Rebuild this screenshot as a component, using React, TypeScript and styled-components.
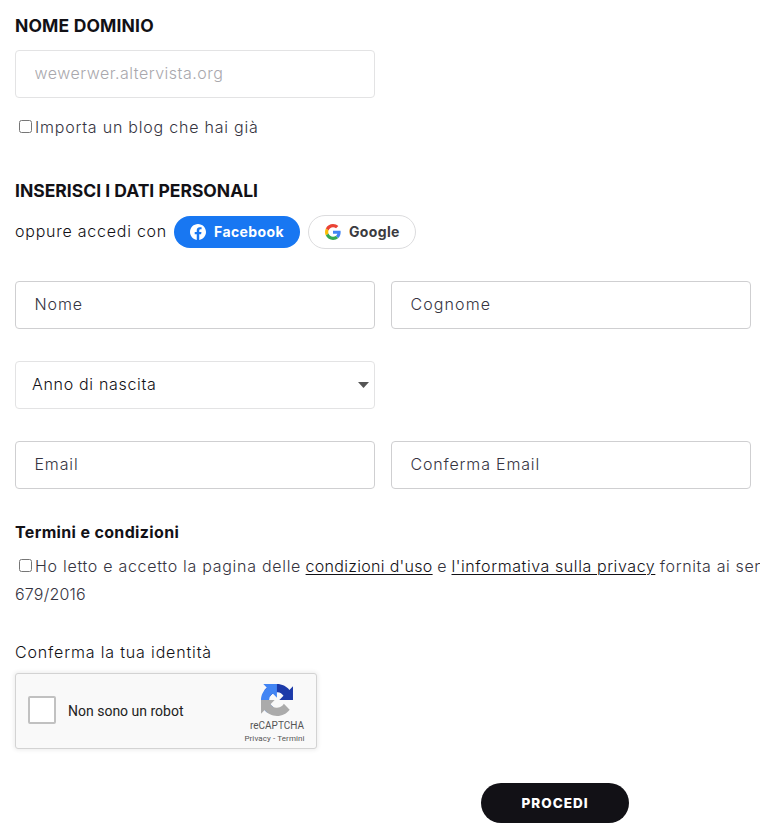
import React from "react";
import styled, { createGlobalStyle, css } from "styled-components";

const GlobalStyle = createGlobalStyle`
  *, *::before, *::after { box-sizing: border-box; }
  html, body { margin: 0; overflow: hidden; background: #fff; }
  body {
    font-family: Inter, "Open Sans", sans-serif;
    font-size: 16px;
    font-weight: 300;
    line-height: 28px;
    color: #121116;
  }
`;

type Tracked = { $track?: number };
const track = css<Tracked>`letter-spacing: ${(p) => p.$track ?? 0}px;`;

const Form = styled.form`
  display: flex;
  flex-direction: column;
  align-items: flex-start;
  height: 829px;
  padding: 12px 0 0 15px;
  overflow: hidden;
`;

const Section = styled.section<{ $top?: number }>`
  display: flex;
  flex-direction: column;
  align-items: flex-start;
  margin-top: ${(p) => p.$top ?? 0}px;
`;

const Title = styled.h2<Tracked>`
  margin: 0;
  font-size: 17.5px;
  font-weight: 650;
  line-height: 28px;
  ${track}
`;

const Subtitle = styled.h3<Tracked>`
  margin: 0;
  font-size: 16px;
  font-weight: 650;
  line-height: 28px;
  ${track}
`;

const Label = styled.span<Tracked>`
  white-space: nowrap;
  ${track}
`;

const fieldBox = css`
  width: 360px;
  height: 48px;
  border-radius: 4px;
  background: #fff;
  font: inherit;
  outline: none;
`;

const Input = styled.input<Tracked & { $muted?: boolean }>`
  ${fieldBox}
  padding: 0 19px 2px 18.5px;
  border: 1px solid ${(p) => (p.$muted ? "#e3e3e4" : "#cfcfd1")};
  color: #36343f;
  ${track}
  &::placeholder {
    color: ${(p) => (p.$muted ? "#a9a8ad" : "#36343f")};
    opacity: 1;
  }
`;

const SelectBox = styled.div`
  ${fieldBox}
  display: flex;
  align-items: center;
  justify-content: space-between;
  padding: 0 5px 0 16px;
  border: 1px solid #e3e3e4;
  & > span { padding-bottom: 2px; }
`;

const Grid = styled.div`
  display: grid;
  grid-template-columns: 360px 360px;
  gap: 32px 16px;
  margin-top: 32px;
`;

const FullRow = styled.div`
  grid-column: 1 / -1;
`;

const Check = styled.input.attrs({ type: "checkbox" })`
  flex: none;
  width: 13px;
  height: 13px;
  margin: 0 3px 2px 4px;
`;

const CheckRow = styled.label`
  display: flex;
  align-items: center;
  height: 28px;
  color: #36343f;
  white-space: nowrap;
`;

const Terms = styled.div`
  margin-top: 6px;
  color: #36343f;
`;

const TermsText = styled.span`
  white-space: pre;
`;

const Link = styled.a<Tracked>`
  color: #121116;
  text-decoration: underline;
  text-decoration-thickness: 1px;
  text-underline-offset: 2px;
  ${track}
`;

const SocialRow = styled.div`
  display: flex;
  align-items: center;
  height: 34px;
  margin-top: 10px;
`;

const SocialLead = styled(Label)`
  width: 159px;
  padding-bottom: 2px;
`;

const SocialButton = styled.button<Tracked & { $brand: "facebook" | "google" }>`
  display: flex;
  align-items: center;
  gap: 8px;
  padding: 0 0 0 16px;
  border-radius: 17px;
  font: 650 14px/20px Inter, sans-serif;
  white-space: nowrap;
  ${track}
  ${(p) =>
    p.$brand === "facebook"
      ? css`
          width: 126px;
          height: 32px;
          border: 0;
          background: #1877f2;
          color: #fff;
        `
      : css`
          width: 108px;
          height: 34px;
          margin-left: 8px;
          border: 1px solid #dcdcde;
          background: #fff;
          color: #3c3b40;
        `}
`;

const Captcha = styled.div`
  display: flex;
  width: 302px;
  height: 76px;
  margin-top: 7px;
  border: 1px solid #d3d3d3;
  border-radius: 3px;
  background: #f9f9f9;
  box-shadow: 0 0 4px 1px rgba(0, 0, 0, 0.08);
  font-family: Roboto, sans-serif;
  font-weight: 400;
`;

const CaptchaMain = styled.label`
  display: flex;
  flex: 1;
  align-items: center;
  gap: 12px;
  padding: 0 0 0 12px;
  font-size: 14px;
  color: #222;
`;

const CaptchaBox = styled.span`
  width: 28px;
  height: 28px;
  margin-bottom: 2px;
  border: 2px solid #c1c1c1;
  border-radius: 2px;
  background: #fff;
`;

const CaptchaBrand = styled.div`
  display: flex;
  flex-direction: column;
  align-items: center;
  width: 58px;
  margin-right: 10px;
  padding-top: 10px;
  color: #555;
`;

const CaptchaName = styled.span`
  margin-top: 4px;
  font-size: 10px;
  line-height: 12px;
`;

const CaptchaLinks = styled.span`
  margin: 2px 5px 0 0;
  font-size: 8px;
  line-height: 10px;
  letter-spacing: 0.1px;
  white-space: pre;
`;

const Submit = styled.button`
  width: 148px;
  height: 40px;
  margin: 34px 0 0 466px;
  padding: 0;
  border: 0;
  border-radius: 20px;
  background: #121116;
  color: #fff;
  font: 800 13.5px/20px Inter, sans-serif;
  letter-spacing: 1px;
`;

const FacebookIcon = () => (
  <svg width="16" height="16" viewBox="0 0 24 24">
    <path
      fill="#fff"
      d="M24 12.073c0-6.627-5.373-12-12-12s-12 5.373-12 12c0 5.99 4.388 10.954 10.125 11.854v-8.385H7.078v-3.47h3.047V9.43c0-3.007 1.792-4.669 4.533-4.669 1.312 0 2.686.235 2.686.235v2.953H15.83c-1.491 0-1.956.925-1.956 1.874v2.25h3.328l-.532 3.47h-2.796v8.385C19.612 23.027 24 18.062 24 12.073z"
    />
  </svg>
);

const GoogleIcon = () => (
  <svg width="16" height="16" viewBox="0 0 48 48">
    <path fill="#EA4335" d="M24 9.5c3.54 0 6.71 1.22 9.21 3.6l6.85-6.85C35.9 2.38 30.47 0 24 0 14.62 0 6.51 5.38 2.56 13.22l7.98 6.19C12.43 13.72 17.74 9.5 24 9.5z" />
    <path fill="#4285F4" d="M46.98 24.55c0-1.57-.15-3.09-.38-4.55H24v9.02h12.94c-.58 2.96-2.26 5.48-4.78 7.18l7.73 6c4.51-4.18 7.09-10.36 7.09-17.65z" />
    <path fill="#FBBC05" d="M10.53 28.59c-.48-1.45-.76-2.99-.76-4.59s.27-3.14.76-4.59l-7.98-6.19C.92 16.46 0 20.12 0 24c0 3.88.92 7.54 2.56 10.78l7.97-6.19z" />
    <path fill="#34A853" d="M24 48c6.48 0 11.93-2.13 15.89-5.81l-7.73-6c-2.15 1.45-4.92 2.3-8.16 2.3-6.26 0-11.57-4.22-13.47-9.91l-7.98 6.19C6.51 42.62 14.62 48 24 48z" />
  </svg>
);

const CaptchaIcon = () => (
  <svg width="32" height="32" viewBox="0 0 64 64">
    <path fill="#1C3AA9" d="M64 31.955l-.033-1.37V4.687l-7.16 7.16C50.948 4.674 42.033.093 32.05.093c-10.4 0-19.622 4.96-25.458 12.64l11.736 11.86a15.55 15.55 0 0 1 4.754-5.334c2.05-1.6 4.952-2.906 8.968-2.906.485 0 .86.057 1.135.163 4.976.393 9.288 3.14 11.828 7.124l-8.307 8.307L64 31.953" />
    <path fill="#4285F4" d="M31.862.094l-1.37.033H4.594l7.16 7.16C4.58 13.147 0 22.06 0 32.046c0 10.4 4.96 19.622 12.64 25.458L24.5 45.768a15.55 15.55 0 0 1-5.334-4.754c-1.6-2.05-2.906-4.952-2.906-8.968 0-.485.057-.86.163-1.135.393-4.976 3.14-9.288 7.124-11.828l8.307 8.307L31.86.095" />
    <path fill="#ABABAB" d="M.001 32.045l.033 1.37v25.898l7.16-7.16c5.86 7.173 14.774 11.754 24.76 11.754 10.4 0 19.622-4.96 25.458-12.64l-11.736-11.86a15.55 15.55 0 0 1-4.754 5.334c-2.05 1.6-4.952 2.906-8.968 2.906-.485 0-.86-.057-1.135-.163-4.976-.393-9.288-3.14-11.828-7.124l8.307-8.307c-10.522.04-22.4.066-27.295-.005" />
  </svg>
);

const CaretIcon = () => (
  <svg width="11" height="6" viewBox="0 0 11 6">
    <path fill="#555" d="M0 0h11L5.5 6z" />
  </svg>
);

export default function App() {
  return (
    <>
      <GlobalStyle />
      <Form>
        <Section>
          <Title $track={0.15}>NOME DOMINIO</Title>
          <Section $top={10}>
            <Input $muted $track={0.5} placeholder="wewerwer.altervista.org" />
          </Section>
          <Section $top={15}>
            <CheckRow>
              <Check />
              <Label $track={0.78}>Importa un blog che hai già</Label>
            </CheckRow>
          </Section>
        </Section>

        <Section $top={36}>
          <Title $track={0}>INSERISCI I DATI PERSONALI</Title>
          <SocialRow>
            <SocialLead $track={0.76}>oppure accedi con</SocialLead>
            <SocialButton type="button" $brand="facebook" $track={0.4}>
              <FacebookIcon />
              Facebook
            </SocialButton>
            <SocialButton type="button" $brand="google" $track={0.35}>
              <GoogleIcon />
              Google
            </SocialButton>
          </SocialRow>
          <Grid>
            <Input $track={0.9} placeholder="Nome" />
            <Input $track={1.1} placeholder="Cognome" />
            <FullRow>
              <SelectBox>
                <Label $track={0.68}>Anno di nascita</Label>
                <CaretIcon />
              </SelectBox>
            </FullRow>
            <Input $track={0.85} placeholder="Email" />
            <Input $track={0.83} placeholder="Conferma Email" />
          </Grid>
        </Section>

        <Section $top={29}>
          <Subtitle $track={0.35}>Termini e condizioni</Subtitle>
          <Terms>
            <CheckRow>
              <Check />
              <TermsText>
                <Label $track={0.71}>Ho letto e accetto la pagina delle</Label>{" "}
                <Link $track={0.3}>condizioni d'uso</Link>
                <Label $track={0.2}> e </Label>
                <Link $track={0.58}>l'informativa sulla privacy</Link>{" "}
                <Label $track={0.62}>fornita ai sen</Label>
              </TermsText>
            </CheckRow>
            <Label $track={0.2}>679/2016</Label>
          </Terms>
        </Section>

        <Section $top={30}>
          <Label $track={0.84}>Conferma la tua identità</Label>
          <Captcha>
            <CaptchaMain>
              <CaptchaBox />
              Non sono un robot
            </CaptchaMain>
            <CaptchaBrand>
              <CaptchaIcon />
              <CaptchaName>reCAPTCHA</CaptchaName>
              <CaptchaLinks>Privacy - Termini</CaptchaLinks>
            </CaptchaBrand>
          </Captcha>
        </Section>

        <Submit type="button">PROCEDI</Submit>
      </Form>
    </>
  );
}
